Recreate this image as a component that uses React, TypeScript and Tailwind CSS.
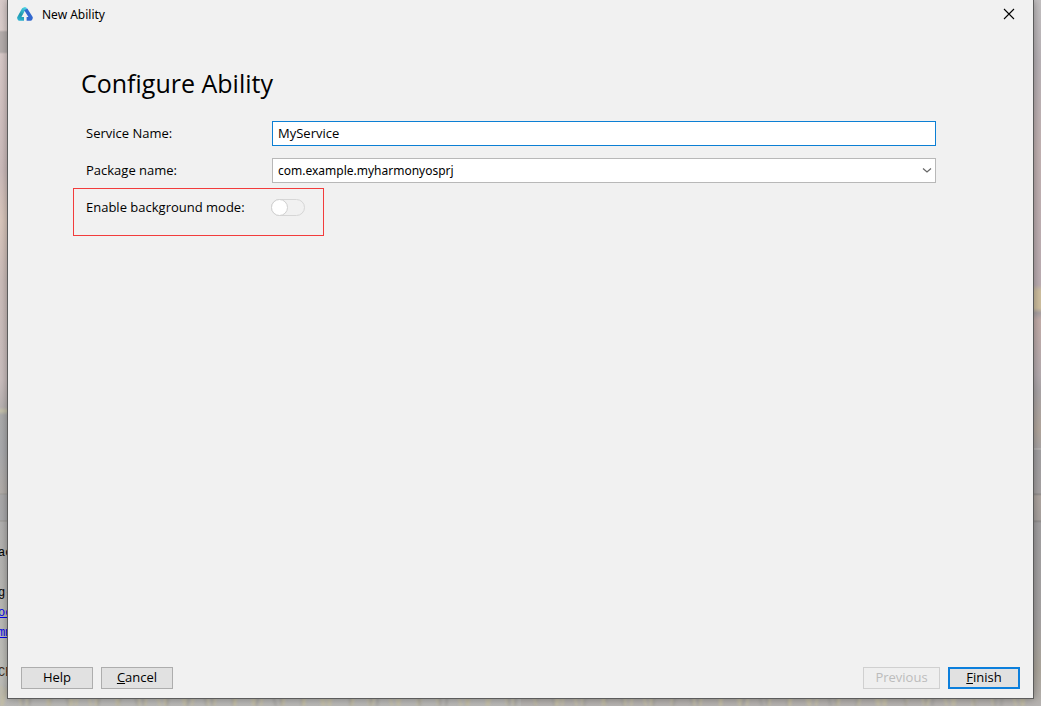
import React, { useState } from 'react'

const blades = Array.from({ length: 150 }, (_, i) => ({
    x: (i * 37 + (i % 5) * 11) % 1041,
    lean: ((i * 7) % 5) - 2,
    tall: 14 + ((i * 13) % 12),
}))

const consoleLines = [
    { text: 'ac', style: 'top-[543px] text-black' },
    { text: 'g-', style: 'top-[583px] text-black' },
    { text: 'oc', style: 'top-[603px] text-[#0000ee] underline' },
    { text: 'mm', style: 'top-[623px] text-[#0000ee] underline' },
    { text: 'CE', style: 'top-[663px] text-[#3b2a1c]' },
]

function Desktop() {
    return (
        <div aria-hidden="true" className="absolute inset-0 flex overflow-hidden">
            <div className="flex-1 bg-[linear-gradient(#d8cbca_0px,#dccfcd_30px,#b5aead_32px,#b5aead_52px,#d9cac9_54px,#cdbcbc_170px,#dbc8bd_220px,#cdbebb_280px,#cbbfbf_380px,#b9b3b3_407px,#c6c3ac_411px,#acacac_415px,#aaabae_450px,#b3aeaa_493px,#a09e99_494px,#aaa9aa_495px,#aaaaad_520px,#9c9a94_521px,#b2b1b0_522px,#b8b7b4_600px,#c0c0ba_670px,#b9b8b6_706px)]" />
            <div className="flex-1 bg-[linear-gradient(#c4c1c2_0px,#b9b3b7_60px,#c3b3b3_150px,#bcaeb3_285px,#cfbf9f_291px,#cfbf9f_308px,#aaa3a5_313px,#c4aeaa_320px,#b5acb0_375px,#aba6a8_391px,#b3a79d_430px,#a9a5a5_448px,#c1bfbd_449px,#a3a1a3_450px,#a7a3a4_493px,#8f8c8b_494px,#afa6a1_496px,#a9a3a0_520px,#8f8c8b_521px,#a3a1a2_523px,#a6a3a3_620px,#ada79d_670px,#b6b3b1_706px)]" />
            <svg className="absolute inset-x-0 bottom-0 h-5 w-full blur-[1px]" viewBox="0 0 1041 20" preserveAspectRatio="none">
                {blades.map((b, i) => (
                    <path key={i} d={`M${b.x} 20q${b.lean} -6 ${b.lean * 2} -${b.tall}`} fill="none" stroke={i % 3 ? '#c8c1a4' : '#a3a19f'} strokeWidth="3" opacity="0.6" />
                ))}
            </svg>
            {consoleLines.map((line) => (
                <span key={line.text} className={`absolute -left-0.5 font-['Liberation_Mono',monospace] text-[12px] leading-5 ${line.style}`}>{line.text}</span>
            ))}
        </div>
    )
}

function AppLogo() {
    return (
        <svg className="h-4 w-4" viewBox="0 0 16 16" fill="none" strokeWidth="3.6" strokeLinejoin="round">
            <defs>
                <linearGradient id="teal" x1="8" y1="1" x2="2" y2="14" gradientUnits="userSpaceOnUse">
                    <stop stopColor="#4fd6e6" />
                    <stop offset="0.6" stopColor="#1f98ad" />
                    <stop offset="1" stopColor="#2eb2d0" />
                </linearGradient>
            </defs>
            <path d="M7 12.9H2.4L1.9 11.8 6.4 3.6 8 2.8 9 3.6" stroke="url(#teal)" />
            <path d="M8.8 3.4L14 11.8 13.5 12.9H9.6" stroke="#3268cf" />
        </svg>
    )
}

function TitleBar() {
    return (
        <header className="flex h-7 items-center pl-[9px] pr-[18px]">
            <AppLogo />
            <span className="ml-[9px] flex-1 pt-0.5 font-['Noto_Sans',sans-serif] text-[12px]">New Ability</span>
            <button type="button" aria-label="Close">
                <svg className="h-3 w-3" viewBox="0 0 12 12" stroke="#000" strokeWidth="1.1">
                    <path d="M1 1L11 11M11 1L1 11" />
                </svg>
            </button>
        </header>
    )
}

function App() {
    const [name, setName] = useState('MyService')
    const [background, setBackground] = useState(false)

    return (
        <div className="relative flex min-h-screen flex-col px-[7px] pb-[7px] font-['Open_Sans','Noto_Sans',sans-serif] text-[13px] leading-5 text-black">
            <Desktop />
            <div role="dialog" aria-labelledby="heading" className="relative flex flex-1 flex-col border border-t-0 border-[#5c5c5c] bg-[#f1f1f1] shadow-[0_0_8px_rgba(0,0,0,0.35)]">
                <TitleBar />
                <main className="flex-1 pl-[65px] pr-[97px] pt-[35px]">
                    <h1 id="heading" className="pl-2 text-[25px] leading-10">Configure Ability</h1>
                    <div className="mt-[18px] flex h-[25px] items-center pl-[13px]">
                        <label htmlFor="service" className="w-[186px] pb-0.5">Service Name:</label>
                        <input id="service" value={name} onChange={(e) => setName(e.target.value)} className="h-full min-w-0 flex-1 border border-[#0c7fd4] bg-white px-[5px] pb-0.5 outline-none" />
                    </div>
                    <div className="mt-3 flex h-[25px] items-center pl-[13px]">
                        <label htmlFor="package" className="w-[186px] pb-0.5">Package name:</label>
                        <div className="relative h-full flex-1">
                            <select id="package" className="h-full w-full appearance-none border border-[#b8b8b8] bg-white px-[5px] font-['Noto_Sans',sans-serif] text-[12px] outline-none">
                                <option>com.example.myharmonyosprj</option>
                            </select>
                            <svg className="pointer-events-none absolute right-1 top-2 h-2 w-[10px]" viewBox="0 0 10 8" fill="none" stroke="#666" strokeWidth="1.2">
                                <path d="M1 2.5L5 6L9 2.5" />
                            </svg>
                        </div>
                    </div>
                    <div className="mt-[5px] flex h-12 w-[251px] items-start border border-[#f23c3c] pl-3 pt-2">
                        <label htmlFor="background" className="w-[185px]">Enable background mode:</label>
                        <input
                            id="background"
                            type="checkbox"
                            role="switch"
                            checked={background}
                            onChange={(e) => setBackground(e.target.checked)}
                            className="mt-0.5 h-[17px] w-[34px] shrink-0 appearance-none rounded-full border border-[#d6d6d6] before:-ml-px before:-mt-px before:block before:h-[17px] before:w-[17px] before:rounded-full before:border before:border-[#d0d0d0] before:bg-white checked:bg-[#0c7fd4] checked:before:translate-x-[17px]"
                        />
                    </div>
                </main>
                <footer className="flex gap-2 px-[13px] pb-[9px] leading-4">
                    <button type="button" className="h-[22px] w-[72px] border border-[#adadad] bg-[#e1e1e1] pb-0.5">Help</button>
                    <button type="button" className="h-[22px] w-[72px] border border-[#adadad] bg-[#e1e1e1] pb-0.5"><u>C</u>ancel</button>
                    <button type="button" disabled className="ml-auto h-[22px] w-[77px] border border-[#d0d0d0] bg-[#efefef] pb-0.5 text-[#bcbcbc]">Previous</button>
                    <button type="button" className="h-[22px] w-[72px] border-2 border-[#0c7fdc] bg-[#e1e1e1] pb-0.5"><u>F</u>inish</button>
                </footer>
            </div>
        </div>
    )
}

export default App
